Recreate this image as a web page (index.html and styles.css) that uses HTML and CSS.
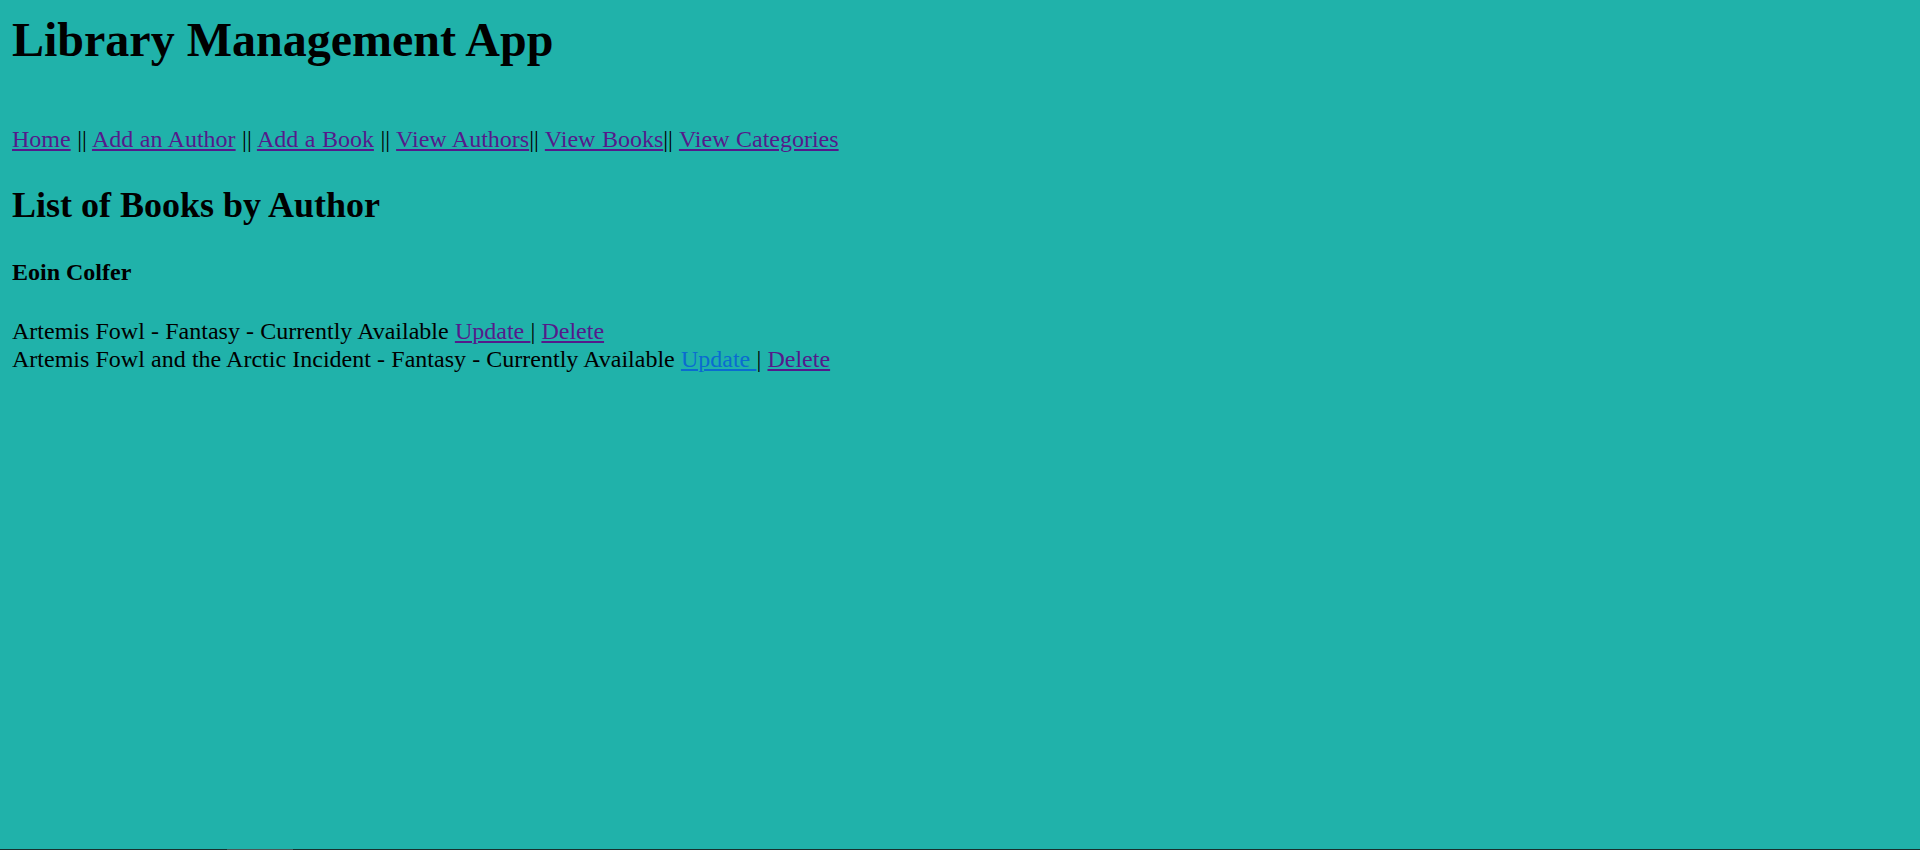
FILE: index.html
```html
<!DOCTYPE html>
<html>
<head>
<meta charset="utf-8">
<title>Library Management App</title>
<link rel="stylesheet" href="styles.css">
</head>
<body>
<h1 class="title">Library Management App</h1>
<div class="nav"><a class="link" href="#">Home</a> || <a class="link" href="#">Add an Author</a> || <a class="link" href="#">Add a Book</a> || <a class="link" href="#">View Authors</a>|| <a class="link" href="#">View Books</a>|| <a class="link" href="#">View Categories</a></div>
<h2 class="heading">List of Books by Author</h2>
<h4 class="author">Eoin Colfer</h4>
<div class="books">
Artemis Fowl - Fantasy - Currently Available <a class="link" href="#">Update </a>| <a class="link" href="#">Delete</a><br>
Artemis Fowl and the Arctic Incident - Fantasy - Currently Available <a class="link link-active" href="#">Update </a>| <a class="link" href="#">Delete</a>
</div>
<div class="bottom-edge"><span class="edge-seg"></span></div>
</body>
</html>
```
FILE: styles.css
```css
html {
  background: #20b2aa;
}
body {
  margin: 12px;
  font-family: "Liberation Serif", "Times New Roman", serif;
  font-size: 24px;
  color: #000;
}
.title {
  font-size: 48px;
  margin: 0 0 59px;
}
.nav {
  margin: 0;
  word-spacing: 0.5px;
}
.link {
  color: #551a8b;
}
.link-active {
  color: #0b6bd0;
}
.heading {
  font-size: 36px;
  margin: 31px 0 33px;
}
.author {
  font-size: 24px;
  margin: 0 0 32px;
}
.books {
  margin: 0;
  line-height: 27.6px;
  word-spacing: 0.2px;
}
.bottom-edge {
  position: fixed;
  left: 0;
  right: 0;
  bottom: 0;
  height: 1px;
  background: #17302e;
}
.edge-seg {
  position: absolute;
  left: 227px;
  width: 66px;
  top: 0;
  height: 1px;
  background: #4a5656;
}
```
